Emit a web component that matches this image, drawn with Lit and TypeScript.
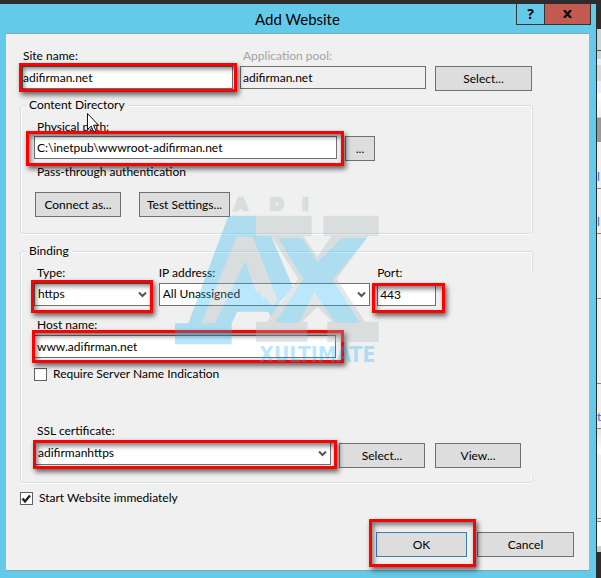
import { LitElement, html, css } from "lit";
import { customElement, state } from "lit/decorators.js";

@customElement("app-root")
export class AppRoot extends LitElement {
  @state() private sni = false;
  @state() private autoStart = true;

  static styles = css`
    :host {
      display: block;
      font: 12px/16px Lato, "Open Sans", sans-serif;
      color: #000;
    }
    * { box-sizing: border-box; }
    .desktop {
      display: flex;
      min-height: 100vh;
      padding-top: 4px;
      background: #2d2d2d;
    }
    .dialog {
      position: relative;
      flex: 1;
      min-width: 0;
      display: flex;
      flex-direction: column;
      padding: 0 7px 7px 6px;
      background: #64caea;
      border-right: 1px solid #2d2d2d;
    }
    .behind {
      width: 4px;
      margin-top: 25px;
      color: #2a6fd0;
      background: linear-gradient(
        #c3d6dc 0 21px, #555 21px 22px, #c3d6dc 22px 30px, #e6eefc 30px 36px,
        #d5d8de 36px 52px, #e6eefc 52px 64px, #fff 64px, #efefef 88px, #999 89px 113px,
        #efefef 113px 159px, #888 159px 160px, #efefef 160px 204px, #888 204px 205px,
        #efefef 205px 269px, #888 269px 270px, #efefef 270px 354px, #888 354px 355px,
        #efefef 355px 399px, #888 399px 400px, #e4e4e4 400px, #fff 425px, #efefef 426px 489px,
        #888 489px 490px, #efefef 490px 492px, #888 492px 493px, #fff 493px 517px,
        #c0d2d8 517px 523px, #2d2d2d 523px
      );
    }
    .behind span { display: block; }
    .behind .first { margin-top: 140px; }
    .behind .second { margin-top: 29px; }
    .behind .third { margin-top: 179px; }

    .titlebar { position: relative; height: 29px; }
    h1 {
      margin: 0;
      font-size: 15px;
      line-height: 30px;
      font-weight: 400;
      text-align: center;
    }
    .caption {
      position: absolute;
      top: 0;
      right: -2px;
      display: flex;
    }
    .caption button {
      width: 29px;
      height: 21px;
      border: 1px solid #333;
      border-top: 0;
      background: #64caea;
      font: 700 14px/18px "Open Sans", sans-serif;
    }
    .caption .close {
      width: 47px;
      margin-left: -1px;
      background: #c35a50;
      display: flex;
      align-items: center;
      justify-content: center;
    }

    .body {
      position: relative;
      flex: 1;
      background: #f0f0f0;
      border: solid #7fa6b8;
      border-width: 1px 0;
      padding: 14px 15px 0;
    }
    .row { display: flex; align-items: flex-start; }
    .field { display: flex; flex-direction: column; min-width: 0; }
    label { display: block; height: 18px; padding-left: 3px; white-space: nowrap; }
    .muted { color: #a3a3a3; }
    input[type="text"], select {
      display: block;
      width: 100%;
      height: 23px;
      margin: 0;
      padding: 0 2px 1px;
      border: 1px solid #707070;
      border-radius: 0;
      background: #fff;
      color: #000;
      font: inherit;
      outline: 0;
      appearance: none;
    }
    select { padding-left: 3px; }
    input[type="text"][readonly] { background: #f0f0f0; }
    button {
      height: 25px;
      padding: 0;
      border: 1px solid #707070;
      border-radius: 0;
      background: #ddd;
      color: #000;
      font: inherit;
    }
    .box { position: relative; }
    .box svg {
      position: absolute;
      right: 4px;
      top: 8px;
      pointer-events: none;
    }

    fieldset {
      position: relative;
      min-width: 0;
      margin: 0 41px 0 -1px;
      padding: 6px 0 0 13px;
      border: 1px solid #d3dfe6;
      border-radius: 3px;
      box-shadow: 0 1px 0 #fff, inset 1px 1px 0 #fff, inset -1px 0 0 #fff;
    }
    legend { margin-left: -8px; padding: 0 3px; background: #f0f0f0; }
    .directory { margin-top: 6px; height: 137px; }
    .binding { margin-top: 9px; height: 240px; }
    .binding::after {
      content: "";
      position: absolute;
      top: 14px;
      bottom: 6px;
      right: -1px;
      width: 2px;
      background: #f0f0f0;
    }

    .identity { padding: 0 42px 0 1px; }
    .site label { padding-left: 1px; }
    .site input[type="text"] { padding-left: 0; }
    .site { flex: 211; margin-right: 7px; }
    .pool { flex: 186; margin-right: 9px; }
    .identity button { flex: 0 0 97px; margin-top: 18px; }
    .path { flex: 303; margin-right: 8px; }
    .path-row { padding-right: 157px; }
    .path-row button { flex: 0 0 30px; margin-top: 17px; }
    .path label { height: 17px; }
    .auth { height: 28px; margin-top: 3px; padding-left: 3px; }
    .actions { gap: 18px; padding-left: 1px; }
    .actions .connect { width: 86px; }
    .actions .test { width: 91px; }

    .address { padding-right: 96px; }
    .type { flex: 117; margin-right: 8px; }
    .ip { flex: 212; margin-right: 7px; }
    .port { flex: 59; }
    .ip label, .port label { padding-left: 0; }
    .host { margin: 11px 196px 0 0; }
    .check { display: flex; align-items: center; gap: 6px; height: 16px; padding: 0; }
    .sni { margin-top: 8px; }
    .cert-row { margin-top: 41px; padding-right: 11px; }
    .cert { flex: 297; margin-right: 8px; }
    .cert label { height: 19px; }
    .cert-row button { flex: 0 0 86px; margin: 20px 10px 0 0; }
    .cert-row button:last-child { margin-right: 0; }
    .start { margin-top: 7px; margin-left: -1px; }

    input[type="checkbox"] {
      appearance: none;
      width: 13px;
      height: 13px;
      margin: 0;
      border: 1px solid #606060;
      background: #fff;
    }
    input[type="checkbox"]:checked {
      background: #fff url("data:image/svg+xml,%3Csvg xmlns='http://www.w3.org/2000/svg' viewBox='0 0 11 11'%3E%3Cpath d='M1.500 5.500 L4 8.500 L9 2.500' fill='none' stroke='%23222' stroke-width='2.400'/%3E%3C/svg%3E");
    }

    .footer { display: flex; justify-content: flex-end; gap: 10px; margin-top: 26px; }
    .footer button { width: 97px; }
    .footer .ok { width: 91px; border-color: #3c7fb1; }

    /* Red highlight frames laid over the controls */
    .mark { position: relative; }
    .mark button { display: block; }
    .mark::after {
      content: "";
      position: absolute;
      z-index: 1;
      inset: var(--frame);
      border: 3px solid #f00;
      box-shadow: 2px 3px 5px rgba(0, 0, 0, 0.6), inset 2px 3px 5px rgba(0, 0, 0, 0.5);
      pointer-events: none;
    }
    .mark-site { --frame: -3px -4px -3px -3px; }
    .mark-path { --frame: -5px -7px -7px -8px; }
    .mark-type { --frame: -3px -2px -7px -3px; }
    .mark-port { --frame: 0 -9px -7px -5px; }
    .mark-host { --frame: -5px -8px -5px -2px; }
    .mark-cert { --frame: -2px -6px -4px -1px; }
    .mark-ok { --frame: -13px -9px -10px -7px; }

    .watermark {
      position: absolute;
      z-index: 2;
      left: 165px;
      top: 181px;
      opacity: 0.3;
      pointer-events: none;
    }
    .adi {
      font: 700 50px "DejaVu Sans", sans-serif;
      fill: #a6b3b3;
      stroke: #a6b3b3;
      stroke-width: 8px;
    }
    .ultimate { font: 700 63px "DejaVu Sans Condensed", sans-serif; fill: #1db3f2; }
    .pointer { position: absolute; z-index: 2; left: 87px; top: 109px; pointer-events: none; }
  `;

  private chevron() {
    return html`<svg width="9" height="7" viewBox="0 0 9 7" aria-hidden="true">
      <path d="M1 1.500L4.500 5L8 1.500" fill="none" stroke="#555" stroke-width="2" /></svg>`;
  }

  private watermark() {
    return html`<svg class="watermark" width="230" height="190" viewBox="0 0 690 570" aria-hidden="true">
      <text class="adi" y="76"><tspan x="208">A</tspan><tspan x="314">D</tspan><tspan x="412">I</tspan></text>
      <path fill="#1db3f2" d="M190 92H273V152H318L385 310L345 350L322 408L309 378H218L200 415V478H30V415H70Z"/>
      <path fill="#a6b3b3" d="M215 155H263L338 345L322 365L305 340H280L241 228L150 415H110Z"/>
      <path fill="#1db3f2" d="M200 322H285L312 380H172Z"/>
      <path fill="#a6b3b3" d="M273 92H440V152H415L457 215L500 152H475V92H641V152H610L515 282L600 410H641V471H487V410H502L457 365L412 410H427V471H273V410H305L400 282L318 152H273Z"/>
      <path fill="#1db3f2" d="M340 160H412L457 232L530 160H605L502 285L585 413H512L448 322L402 413H330L415 282Z"/>
      <text class="ultimate" x="283" y="530">XULTIMATE</text>
    </svg>`;
  }

  render() {
    return html`
      <div class="desktop">
        <main class="dialog">
          <header class="titlebar">
            <h1>Add Website</h1>
            <div class="caption">
              <button type="button" aria-label="Help">?</button>
              <button type="button" class="close" aria-label="Close">
                <svg width="9" height="8" viewBox="0 0 9 8"><path d="M1 0L8 8M8 0L1 8" stroke="#111" stroke-width="2.400"/></svg>
              </button>
            </div>
          </header>

          <form class="body" @submit=${(e: Event) => e.preventDefault()}>
            <div class="row identity">
              <div class="field site">
                <label for="site">Site name:</label>
                <div class="mark mark-site"><input id="site" type="text" value="adifirman.net" /></div>
              </div>
              <div class="field pool">
                <label class="muted" for="pool">Application pool:</label>
                <input id="pool" type="text" value="adifirman.net" readonly />
              </div>
              <button type="button">Select...</button>
            </div>

            <fieldset class="directory">
              <legend>Content Directory</legend>
              <div class="row path-row">
                <div class="field path">
                  <label for="path">Physical path:</label>
                  <div class="mark mark-path"><input id="path" type="text" value="C:\\inetpub\\wwwroot-adifirman.net" /></div>
                </div>
                <button type="button" aria-label="Browse">...</button>
              </div>
              <div class="auth">Pass-through authentication</div>
              <div class="row actions">
                <button type="button" class="connect">Connect as...</button>
                <button type="button" class="test">Test Settings...</button>
              </div>
            </fieldset>

            <fieldset class="binding">
              <legend>Binding</legend>
              <div class="row address">
                <div class="field type">
                  <label for="type">Type:</label>
                  <div class="box mark mark-type">
                    <select id="type"><option>https</option><option>http</option></select>${this.chevron()}
                  </div>
                </div>
                <div class="field ip">
                  <label for="ip">IP address:</label>
                  <div class="box"><select id="ip"><option>All Unassigned</option></select>${this.chevron()}</div>
                </div>
                <div class="field port">
                  <label for="port">Port:</label>
                  <div class="mark mark-port"><input id="port" type="text" value="443" /></div>
                </div>
              </div>
              <div class="field host">
                <label for="host">Host name:</label>
                <div class="mark mark-host"><input id="host" type="text" value="www.adifirman.net" /></div>
              </div>
              <label class="check sni">
                <input type="checkbox" .checked=${this.sni} @change=${() => (this.sni = !this.sni)} />
                Require Server Name Indication
              </label>
              <div class="row cert-row">
                <div class="field cert">
                  <label for="cert">SSL certificate:</label>
                  <div class="box mark mark-cert">
                    <select id="cert"><option>adifirmanhttps</option></select>${this.chevron()}
                  </div>
                </div>
                <button type="button">Select...</button>
                <button type="button">View...</button>
              </div>
            </fieldset>

            <label class="check start">
              <input type="checkbox" .checked=${this.autoStart} @change=${() => (this.autoStart = !this.autoStart)} />
              Start Website immediately
            </label>

            <div class="footer">
              <div class="mark mark-ok"><button type="submit" class="ok">OK</button></div>
              <button type="button">Cancel</button>
            </div>
          </form>

          ${this.watermark()}
          <svg class="pointer" width="12" height="20" viewBox="0 0 12 20" aria-hidden="true">
            <path d="M0.500 0.500V16.500L4.200 13L6.800 19L9 18L6.500 12.200H11.500Z" fill="#fff" stroke="#111"/>
          </svg>
        </main>
        <div class="behind" aria-hidden="true">
          <span class="first">l</span><span class="second">l</span><span class="third">t</span>
        </div>
      </div>
    `;
  }
}
